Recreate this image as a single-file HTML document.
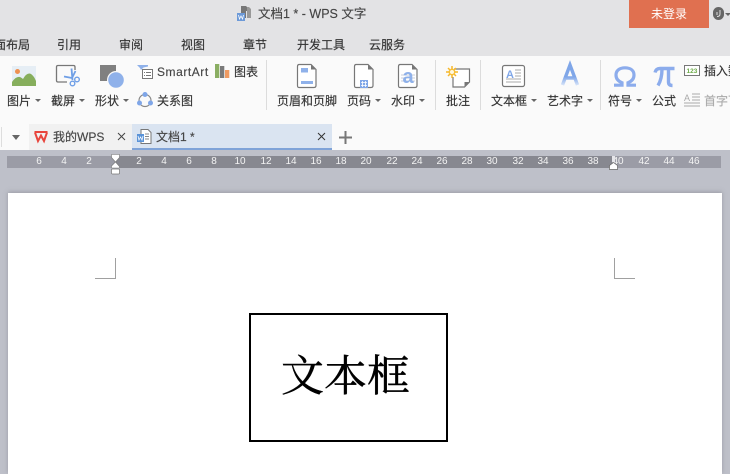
<!DOCTYPE html>
<html><head><meta charset="utf-8">
<style>
*{margin:0;padding:0;box-sizing:border-box}
html,body{width:730px;height:474px;overflow:hidden;background:#bec0c9}
body{position:relative;font-family:"Liberation Sans","Noto Sans CJK SC",sans-serif;font-size:12px;color:#333}
.a{position:absolute}
.t{position:absolute;white-space:nowrap;line-height:16px;font-size:12px;color:#333;-webkit-text-stroke:.15px currentColor}
.m{color:#444}
.c{position:absolute;width:0;height:0;border-left:3px solid transparent;border-right:3px solid transparent;border-top:3px solid #666}
.s{position:absolute;width:1px;top:60px;height:50px;background:#dcdcdc}
.r{position:absolute;top:156px;width:24px;text-align:center;font-size:10px;line-height:12px;color:#f4f4f4;font-family:"Liberation Sans",sans-serif}
svg{position:absolute;overflow:visible}
</style></head><body>
<div class="a" style="left:0;top:0;width:730px;height:56px;background:#e3e3e5"></div>
<div class="a" style="left:0;top:56px;width:730px;height:94px;background:#fafafa"></div>

<svg style="left:237px;top:5px" width="16" height="16" viewBox="0 0 16 16"><path d="M4 1h5l2 2v3H9v7H4z" fill="#777"/><path d="M10 2h2l2 2v9h-4z" fill="#999"/><rect x="0" y="8" width="8" height="8" fill="#6d9ad8"/><path d="M1.500 10l1 4 1.500-3 1.500 3 1-4" fill="none" stroke="#fff" stroke-width=".8"/></svg>
<div class="t m" style="left:258px;top:6px;font-size:12.500px">文档1 * - WPS 文字</div>
<div class="a" style="left:629px;top:0;width:80px;height:28px;background:#e07050;color:#fff;text-align:center;line-height:28px;font-size:12px">未登录</div>
<div class="a" style="left:713px;top:7px;width:11px;height:13px;border-radius:6px;background:#666"></div>
<svg style="left:715px;top:9px" width="7" height="9" viewBox="0 0 7 9"><path d="M5 1v4Q5 7.500 2 7.500M2 3v3" fill="none" stroke="#ddd"/></svg>
<div class="c" style="left:725px;top:13px"></div>

<div class="t" style="left:-12px;top:37px;width:42px;overflow:hidden;direction:rtl">页面布局</div>
<div class="t" style="left:57px;top:37px">引用</div>
<div class="t" style="left:119px;top:37px">审阅</div>
<div class="t" style="left:181px;top:37px">视图</div>
<div class="t" style="left:243px;top:37px">章节</div>
<div class="t" style="left:297px;top:37px">开发工具</div>
<div class="t" style="left:369px;top:37px">云服务</div>

<!-- picture -->
<svg style="left:12px;top:66px" width="24" height="20" viewBox="0 0 24 20"><rect width="24" height="20" fill="#e6eef5"/><circle cx="5.500" cy="5.500" r="2.500" fill="#ee9050"/><path d="M0 20v-4q4-6 8-5 2 1 3 2 4-7 8-5 3 2 5 7v5z" fill="#86ae5c"/></svg>
<div class="t" style="left:7px;top:93px">图片</div><div class="c" style="left:35px;top:99px"></div>
<!-- screenshot -->
<svg style="left:56px;top:65px" width="24" height="22" viewBox="0 0 24 22"><path d="M11 17H2q-1.500 0-1.500-1.500V2Q.5.500 2 .5h15.500Q19 .5 19 2v3" fill="none" stroke="#777" stroke-width="1.300"/><path d="M15.500 3.500L16.500 15M8 11.500l8 1.500 3.500-7" stroke="#6f9fe6" stroke-width="1.800" fill="none"/><circle cx="21" cy="14.500" r="2.300" fill="none" stroke="#6f9fe6" stroke-width="1.400"/><circle cx="16.500" cy="18.500" r="2.300" fill="none" stroke="#6f9fe6" stroke-width="1.400"/></svg>
<div class="t" style="left:51px;top:93px">截屏</div><div class="c" style="left:79px;top:99px"></div>
<!-- shapes -->
<svg style="left:100px;top:65px" width="25" height="23" viewBox="0 0 25 23"><rect width="16" height="16" fill="#808080"/><circle cx="16" cy="15" r="9" fill="#fafafa"/><circle cx="16" cy="15" r="7.800" fill="#8fb1ea"/></svg>
<div class="t" style="left:95px;top:93px">形状</div><div class="c" style="left:123px;top:99px"></div>
<!-- smartart -->
<svg style="left:137px;top:65px" width="16" height="14" viewBox="0 0 16 14"><path d="M0 0h11v1.500L6.500 2.500 4 5 3 3z" fill="#8fb1ea"/><rect x="5.500" y="4.500" width="10" height="9" fill="#fff" stroke="#777"/><path d="M7 7.500h1M9 7.500h5M7 10.500h1M9 10.500h5" stroke="#777"/></svg>
<div class="t m" style="left:157px;top:64px;letter-spacing:.55px">SmartArt</div>
<svg style="left:215px;top:64px" width="15" height="14" viewBox="0 0 15 14"><rect x="0" y="0" width="4.300" height="14" fill="#8aae62"/><rect x="5" y="2" width="4.300" height="12" fill="#7a7a7a"/><rect x="10" y="6" width="4.300" height="8" fill="#ee9a62"/></svg>
<div class="t" style="left:234px;top:64px">图表</div>
<svg style="left:137px;top:92px" width="16" height="16" viewBox="0 0 16 16"><circle cx="8" cy="8.500" r="6" fill="none" stroke="#888" stroke-width="1.200"/><circle cx="8" cy="2.500" r="2.500" fill="#7fa6e8"/><circle cx="2.500" cy="11" r="2.500" fill="#7fa6e8"/><circle cx="13.500" cy="11" r="2.500" fill="#7fa6e8"/></svg>
<div class="t" style="left:157px;top:93px">关系图</div>
<div class="s" style="left:266px"></div>

<!-- header/footer -->
<svg style="left:297px;top:64px" width="20" height="24" viewBox="0 0 20 24"><path d="M2 .5h12l5 5v16q0 2-2 2H2q-1.500 0-1.500-2v-19q0-2 1.500-2z" fill="#fff" stroke="#777" stroke-width="1.200"/><path d="M14 .5l5 5h-5z" fill="#777"/><rect x="4" y="4" width="7" height="4.500" fill="#8fb1ea"/><rect x="4" y="17" width="12" height="3" fill="#8fb1ea"/></svg>
<div class="t" style="left:277px;top:93px">页眉和页脚</div>
<svg style="left:354px;top:64px" width="20" height="24" viewBox="0 0 20 24"><path d="M2 .5h12l5 5v16q0 2-2 2H2q-1.500 0-1.500-2v-19q0-2 1.500-2z" fill="#fff" stroke="#777" stroke-width="1.200"/><path d="M14 .5l5 5h-5z" fill="#777"/><rect x="6" y="16" width="8" height="8" fill="#7fa6e8"/><path d="M8.500 17v6M11.500 17v6M7 18.500h6M7 21.500h6" stroke="#fff" stroke-width=".8"/></svg>
<div class="t" style="left:347px;top:93px">页码</div><div class="c" style="left:375px;top:99px"></div>
<svg style="left:398px;top:64px" width="20" height="24" viewBox="0 0 20 24"><path d="M2 .5h12l5 5v16q0 2-2 2H2q-1.500 0-1.500-2v-19q0-2 1.500-2z" fill="#fff" stroke="#777" stroke-width="1.200"/><path d="M14 .5l5 5h-5z" fill="#777"/><path d="M3 11h14M3 14h14M3 17h14" stroke="#c8ced8"/><text x="4.500" y="19" font-size="20" font-weight="bold" font-family="Liberation Sans" fill="#8fb1ea">a</text></svg>
<div class="t" style="left:391px;top:93px">水印</div><div class="c" style="left:419px;top:99px"></div>
<div class="s" style="left:435px"></div>

<!-- comment -->
<svg style="left:446px;top:66px" width="25" height="22" viewBox="0 0 25 22"><path d="M8 3h15.500v13l-5 5H7V11" fill="#fff" stroke="#777" stroke-width="1.200"/><path d="M18.500 21v-5h5z" fill="#777"/><circle cx="6" cy="6" r="3.500" fill="#fbd25c"/><path d="M6 0v12M0 6h12M2 2l8 8M10 2l-8 8" stroke="#f6b82c" stroke-width="1.500"/><circle cx="6" cy="6" r="2" fill="#fff8e0"/></svg>
<div class="t" style="left:446px;top:93px">批注</div>
<div class="s" style="left:480px"></div>

<!-- text box -->
<svg style="left:502px;top:65px" width="23" height="22" viewBox="0 0 23 22"><rect x=".5" y=".5" width="22" height="21" rx="2" fill="#fff" stroke="#777" stroke-width="1.200"/><text x="4" y="13" font-size="11" font-weight="bold" font-family="Liberation Sans" fill="#7fa6e8">A</text><path d="M13 5h6M13 8h6M13 11h6M4 14h15M4 17h15" stroke="#aaa"/></svg>
<div class="t" style="left:491px;top:93px">文本框</div><div class="c" style="left:531px;top:99px"></div>
<!-- word art -->
<svg style="left:559px;top:63px" width="22" height="24" viewBox="0 0 22 24"><defs><linearGradient id="g" gradientUnits="userSpaceOnUse" x1="0" y1="0" x2="0" y2="23"><stop offset=".6" stop-color="#7fa6e8"/><stop offset="1" stop-color="#dfe9fa"/></linearGradient></defs><path d="M3.500 22L11 2 18.500 22M6 15h10" fill="none" stroke="url(#g)" stroke-width="3.400"/></svg>
<div class="t" style="left:547px;top:93px">艺术字</div><div class="c" style="left:587px;top:99px"></div>
<div class="a" style="left:600px;top:60px;width:1px;height:50px;background:#dcdcdc"></div>

<!-- omega, pi -->
<svg style="left:613px;top:66px" width="24" height="21" viewBox="0 0 24 21"><path d="M1 19.200h8v-2.500C4.500 15 3 12.500 3 9 3 4.500 6.500 1.800 12 1.800S21 4.500 21 9c0 3.500-1.500 6-6 7.700v2.500h8" fill="none" stroke="#8cacec" stroke-width="3.200"/></svg>
<svg style="left:654px;top:66px" width="21" height="21" viewBox="0 0 21 21"><path d="M1 6.500Q2 2.500 6 2.500H20.500" fill="none" stroke="#8cacec" stroke-width="3.400"/><path d="M8 3Q8 13 4 19.500M14.500 3V16q0 3.500 4 3.500" fill="none" stroke="#8cacec" stroke-width="3.400"/></svg>
<div class="t" style="left:608px;top:93px">符号</div><div class="c" style="left:636px;top:99px"></div>
<div class="t" style="left:652px;top:93px">公式</div>
<svg style="left:684px;top:65px" width="16" height="11" viewBox="0 0 16 11"><rect x=".5" y=".5" width="15" height="10" fill="#fff" stroke="#777"/><text x="2.500" y="8" font-size="6.500" font-weight="bold" font-family="Liberation Sans" fill="#6cab48">123</text></svg>
<div class="t" style="left:704px;top:63px">插入数字</div>
<svg style="left:684px;top:93px" width="16" height="14" viewBox="0 0 16 14"><text x="0" y="8" font-size="9" font-family="Liberation Sans" fill="#aaa">A</text><path d="M8 1h8M8 4h8M8 7h8M0 10h16M0 13h16" stroke="#aaa"/></svg>
<div class="t" style="left:704px;top:93px;color:#aaa">首字下沉</div>

<!-- tab bar -->
<div class="a" style="left:1px;top:127px;width:1px;height:20px;background:#ddd"></div>
<div class="a" style="left:12px;top:135px;width:0;height:0;border-left:4.500px solid transparent;border-right:4.500px solid transparent;border-top:5px solid #666"></div>
<div class="a" style="left:29px;top:124px;width:103px;height:26px;background:#f1f1f1"></div>
<svg style="left:33px;top:130px" width="16" height="13" viewBox="0 0 16 13"><path d="M1.500 2h13M2 2.500l3 8.500 3-5.500 3 5.500 3-8.500" fill="none" stroke="#e8453c" stroke-width="2"/></svg>
<div class="t m" style="left:53px;top:129px">我的WPS</div>
<svg style="left:117px;top:132px" width="9" height="9" viewBox="0 0 9 9"><path d="M1 1l7 7M8 1l-7 7" stroke="#444"/></svg>
<div class="a" style="left:132px;top:124px;width:200px;height:26px;background:#dae4f1;border-bottom:2px solid #7fa3d8"></div>
<svg style="left:137px;top:129px" width="15" height="15" viewBox="0 0 15 15"><path d="M4 .5h7l3 3v11H4z" fill="#fff" stroke="#777"/><path d="M8 5h4M8 7.500h4M8 10h4" stroke="#888"/><rect x="0" y="5" width="7" height="8" fill="#5a93d8"/><path d="M1 7l1 4 1.500-3 1.500 3 1-4" fill="none" stroke="#fff" stroke-width=".8"/></svg>
<div class="t m" style="left:156px;top:129px">文档1 *</div>
<svg style="left:317px;top:132px" width="9" height="9" viewBox="0 0 9 9"><path d="M1 1l7 7M8 1l-7 7" stroke="#333"/></svg>
<svg style="left:339px;top:131px" width="13" height="13" viewBox="0 0 13 13"><path d="M6.500 0v13M0 6.500h13" stroke="#777" stroke-width="2"/></svg>

<!-- ruler -->
<div class="a" style="left:7px;top:156px;width:714px;height:12px;background:#9b9ca6"></div>
<div class="a" style="left:115px;top:156px;width:498px;height:12px;background:#878890"></div>
<div class="r" style="left:27px">6</div><div class="r" style="left:52px">4</div><div class="r" style="left:77px">2</div>
<div class="r" style="left:127px">2</div><div class="r" style="left:152px">4</div><div class="r" style="left:177px">6</div><div class="r" style="left:202px">8</div><div class="r" style="left:228px">10</div><div class="r" style="left:254px">12</div><div class="r" style="left:279px">14</div><div class="r" style="left:304px">16</div><div class="r" style="left:329px">18</div><div class="r" style="left:354px">20</div><div class="r" style="left:380px">22</div><div class="r" style="left:405px">24</div><div class="r" style="left:430px">26</div><div class="r" style="left:455px">28</div><div class="r" style="left:480px">30</div><div class="r" style="left:506px">32</div><div class="r" style="left:531px">34</div><div class="r" style="left:556px">36</div><div class="r" style="left:581px">38</div><div class="r" style="left:606px">40</div><div class="r" style="left:632px">42</div><div class="r" style="left:657px">44</div><div class="r" style="left:682px">46</div>
<svg style="left:111px;top:154px" width="9" height="21" viewBox="0 0 9 21"><path d="M.5.500h8v3l-4 4.500 4 4.500v1.500h-8V12l4-4-4-4.500z" fill="#fff" stroke="#777" stroke-width=".6"/><rect x=".5" y="15" width="8" height="5" rx="1" fill="#fff" stroke="#777" stroke-width=".7"/></svg>
<div class="a" style="left:612px;top:156px;width:3px;height:6px;background:#e6e6ea"></div>
<svg style="left:609px;top:162px" width="9" height="8" viewBox="0 0 9 8"><path d="M.5 7.500v-4l4-3 4 3v4z" fill="#fff" stroke="#666" stroke-width=".7"/></svg>

<!-- page -->
<div class="a" style="left:8px;top:193px;width:714px;height:281px;background:#fff;box-shadow:0 -1px 4px rgba(120,120,130,.5)"></div>
<div class="a" style="left:95px;top:258px;width:21px;height:21px;border-right:1px solid #a0a0a0;border-bottom:1px solid #a0a0a0"></div>
<div class="a" style="left:614px;top:258px;width:21px;height:21px;border-left:1px solid #a0a0a0;border-bottom:1px solid #a0a0a0"></div>
<div class="a" style="left:249px;top:313px;width:199px;height:129px;border:2px solid #000"></div>
<div class="a" style="left:281px;top:355px;white-space:nowrap;font:43px/46px 'Liberation Serif','Noto Serif CJK SC',serif;color:#000;-webkit-text-stroke:.4px #000">文本框</div>
</body></html>
